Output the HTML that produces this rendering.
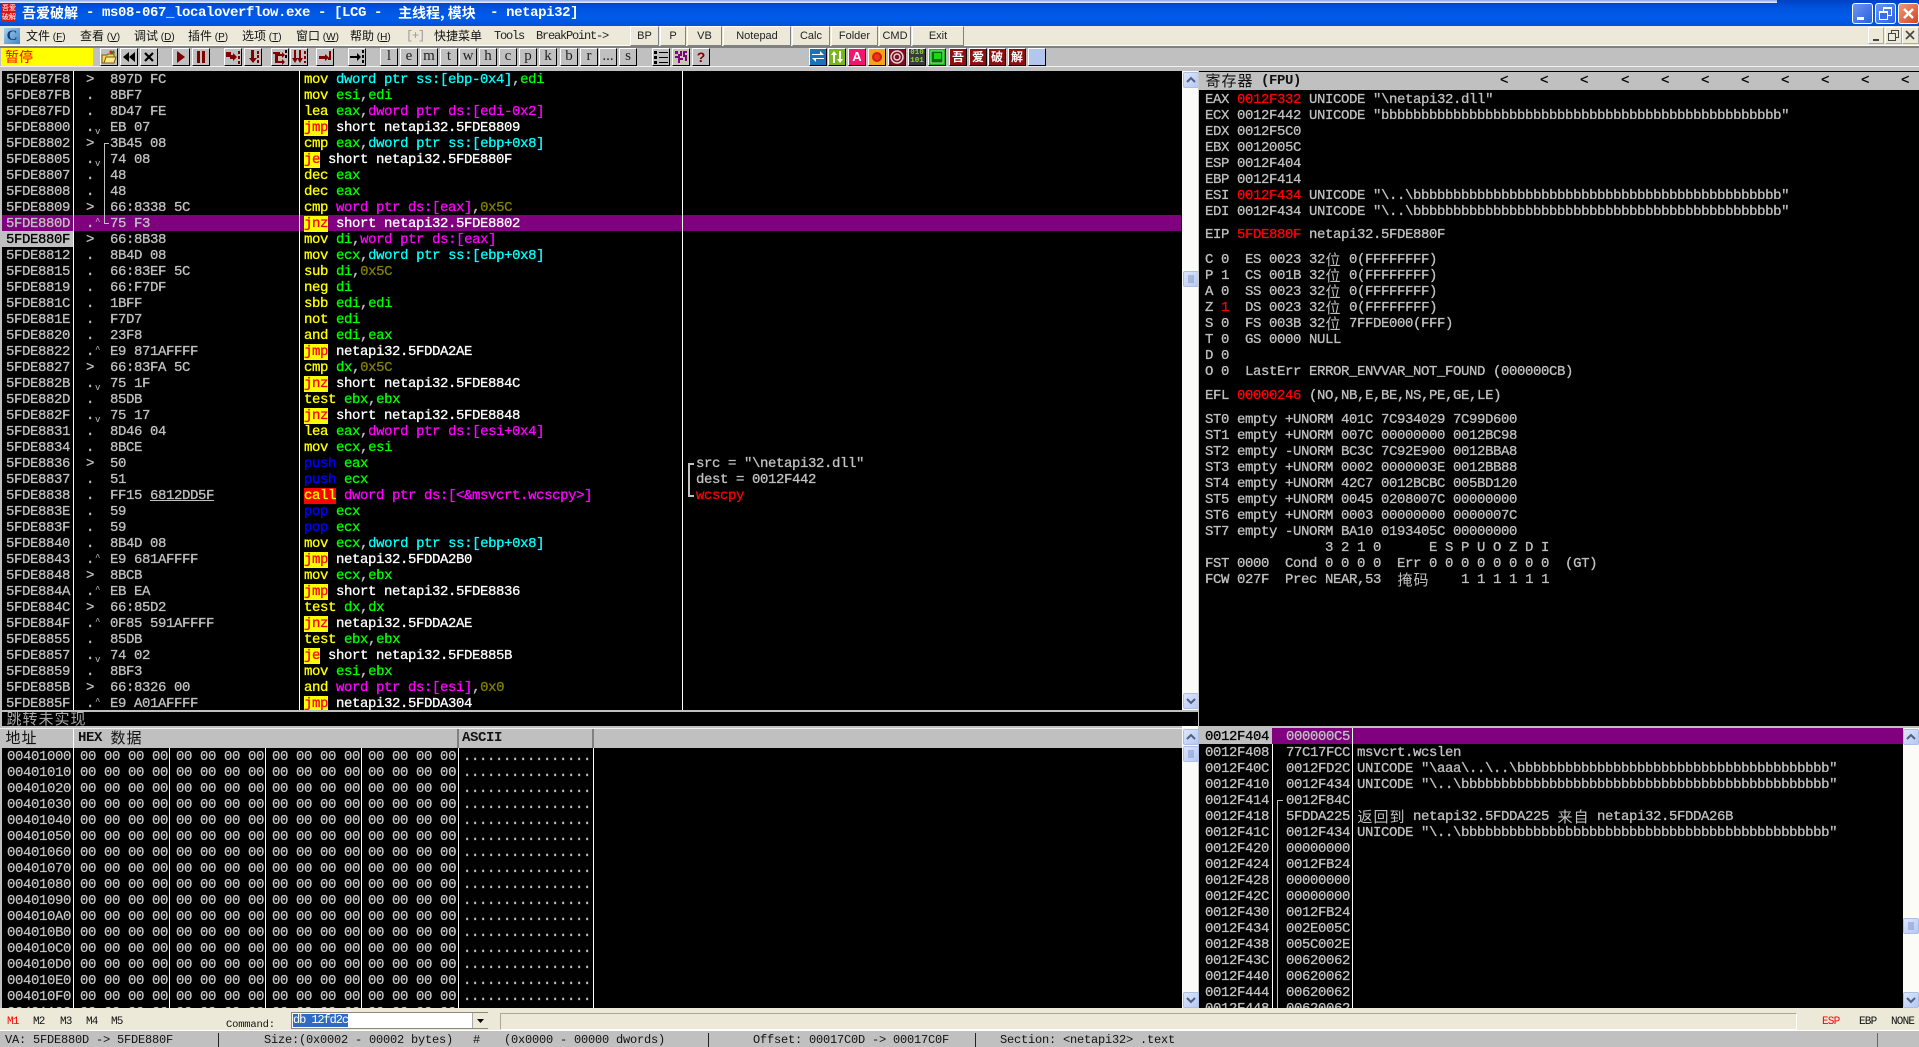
<!DOCTYPE html>
<html><head><meta charset="utf-8"><title>OllyDbg</title>
<style>
html,body{margin:0;padding:0;background:#c0c0c0}
#r{position:relative;width:1919px;height:1047px;overflow:hidden;background:#c0c0c0;font-family:"Liberation Sans","Noto Sans CJK SC",sans-serif}
#r div,#r span.a{position:absolute}
pre{position:absolute;margin:0;font:400 14px/16px "Liberation Mono","Noto Sans CJK SC",monospace;letter-spacing:-.4px;color:#c0c0c0;-webkit-text-stroke:.3px}
.h{font-weight:700;-webkit-text-stroke:0}
.y{color:#ff0}.g{color:#0f0}.c{color:#0ff}.m{color:#f0f}.o{color:#808000}.w{color:#fff}.b{color:#00f}.r{color:#f00}
.j{display:inline-block;height:16px;background:#ff0;color:#f00}
.k{display:inline-block;height:16px;background:#f00;color:#ff0}
.z{display:inline-block;width:16px;font:400 15px/16px "Noto Sans CJK SC",sans-serif;letter-spacing:0;text-align:center;vertical-align:top;-webkit-text-stroke:0}
.v{font-size:9px;line-height:0;position:relative;top:3px;left:1px;-webkit-text-stroke:0}
.u{font-size:9px;line-height:0;position:relative;top:-3px;left:1px;-webkit-text-stroke:0}
.mi{top:28px;font:400 12px/16px "Noto Sans CJK SC",sans-serif;color:#111;white-space:nowrap}
.mi small{font:400 10px/16px "Liberation Sans",sans-serif}
.mt{top:28px;font:400 12px/16px "Liberation Mono",monospace;color:#222;white-space:nowrap;letter-spacing:-1.2px}
.mb{top:26px;height:18px;background:#ece9d8;border:1px solid;border-color:#fff #808080 #808080 #fff;font:400 11px/18px "Liberation Sans",sans-serif;color:#222;text-align:center;box-sizing:content-box}
.t{top:48px;width:16px;height:16px;background:#c0c0c0;border:1px solid;border-color:#fff #000 #000 #fff;font:400 15px/15px "Liberation Serif",serif;color:#222;text-align:center;overflow:hidden}
.t svg{display:block;width:16px;height:16px}
.i{top:48px;width:16px;height:16px;border:1px solid;border-color:#fff #000 #000 #fff;overflow:hidden;text-align:center;color:#fff;font:700 12px/16px "Noto Sans CJK SC",sans-serif}
.i svg{display:block;width:16px;height:16px}
.sb{width:14px;height:14px;background:linear-gradient(135deg,#dde6fb,#b6c8f2);border:1px solid #aebfe6;border-radius:2px}
.sb svg{display:block;width:14px;height:14px}
.lw{width:1px;background:#fff}
.tm{top:1015px;font:400 11px/14px "Liberation Mono",monospace;color:#111;letter-spacing:-.8px}
.st{top:1033px;font:400 12px/14px "Liberation Mono",monospace;letter-spacing:-.2px;color:#111;white-space:nowrap}
</style></head><body><div id="r">

<!-- title bar -->
<div style="left:0;top:0;width:1919px;height:26px;background:linear-gradient(#0041c4,#0052de 30%,#005cea 70%,#0050d8)"></div>
<div style="left:0;top:0;width:1777px;height:3px;background:linear-gradient(#7fa8ea,#f2f5fb)"></div>
<div style="left:2px;top:4px;width:14px;height:18px;background:#d81818;color:#fff;font:400 7px/9px 'Noto Sans CJK SC',sans-serif;text-align:center;overflow:hidden">吾爱破解</div>
<pre class="w h" style="left:22px;top:5px;white-space:pre"><span style="display:inline-block;width:56px;font:700 14px/16px 'Noto Sans CJK SC',sans-serif;letter-spacing:0;vertical-align:top">吾爱破解</span> - ms08-067_localoverflow.exe - [LCG -  <span style="display:inline-block;width:84px;font:700 14px/16px 'Noto Sans CJK SC',sans-serif;letter-spacing:0;vertical-align:top;white-space:pre">主线程, 模块</span> - netapi32]</pre>
<div style="left:1852px;top:3px;width:19px;height:19px;background:linear-gradient(135deg,#6c96f0,#2a5fe0);border:1px solid #fff;border-radius:3px"><div style="left:4px;top:13px;width:7px;height:3px;background:#fff"></div></div>
<div style="left:1875px;top:3px;width:19px;height:19px;background:linear-gradient(135deg,#6c96f0,#2a5fe0);border:1px solid #fff;border-radius:3px"><div style="left:7px;top:3px;width:7px;height:6px;border:1px solid #fff;border-top-width:2px"></div><div style="left:3px;top:7px;width:7px;height:6px;border:1px solid #fff;border-top-width:2px;background:#3a6ce4"></div></div>
<div style="left:1898px;top:3px;width:19px;height:19px;background:linear-gradient(135deg,#f09a78,#d8431c);border:1px solid #fff;border-radius:3px"><svg width="19" height="19" style="display:block"><path d="M5 5L14 14M14 5L5 14" stroke="#fff" stroke-width="2.4" fill="none"/></svg></div>

<!-- menu bar -->
<div style="left:0;top:26px;width:1919px;height:19px;background:#ece9d8"></div>
<div style="left:0;top:45px;width:1919px;height:1px;background:#fff"></div>
<div style="left:0;top:46px;width:1919px;height:2px;background:#808080"></div>
<div style="left:4px;top:28px;width:16px;height:16px;background:linear-gradient(135deg,#a9d3ee,#3f86c4);color:#123a7c;font:700 15px/16px 'Liberation Serif',serif;text-align:center">C</div>
<span class="a mi" style="left:26px">文件<small> (<u>F</u>)</small></span>
<span class="a mi" style="left:80px">查看<small> (<u>V</u>)</small></span>
<span class="a mi" style="left:134px">调试<small> (<u>D</u>)</small></span>
<span class="a mi" style="left:188px">插件<small> (<u>P</u>)</small></span>
<span class="a mi" style="left:242px">选项<small> (<u>T</u>)</small></span>
<span class="a mi" style="left:296px">窗口<small> (<u>W</u>)</small></span>
<span class="a mi" style="left:350px">帮助<small> (<u>H</u>)</small></span>
<span class="a mt" style="left:406px;color:#999">[+]</span>
<span class="a mi" style="left:434px">快捷菜单</span>
<span class="a mt" style="left:494px">Tools</span>
<span class="a mt" style="left:536px">BreakPoint-&gt;</span>
<div class="mb" style="left:630px;width:27px">BP</div>
<div class="mb" style="left:660px;width:24px">P</div>
<div class="mb" style="left:687px;width:33px">VB</div>
<div class="mb" style="left:723px;width:66px">Notepad</div>
<div class="mb" style="left:792px;width:36px">Calc</div>
<div class="mb" style="left:831px;width:45px">Folder</div>
<div class="mb" style="left:879px;width:30px">CMD</div>
<div class="mb" style="left:912px;width:50px">Exit</div>
<div style="left:1868px;top:27px;width:16px;height:17px;background:#ece9d8;border:1px solid;border-color:#fff #aaa #aaa #fff;box-sizing:border-box"><div style="left:4px;top:11px;width:6px;height:2px;background:#444"></div></div>
<div style="left:1885px;top:27px;width:17px;height:17px;background:#ece9d8;border:1px solid;border-color:#fff #aaa #aaa #fff;box-sizing:border-box"><div style="left:5px;top:2px;width:6px;height:6px;border:1px solid #444"></div><div style="left:2px;top:5px;width:6px;height:6px;border:1px solid #444;background:#ece9d8"></div></div>
<div style="left:1902px;top:27px;width:17px;height:17px;background:#ece9d8;border:1px solid;border-color:#fff #aaa #aaa #fff;box-sizing:border-box"><svg width="15" height="15" style="display:block"><path d="M3 3L11 11M11 3L3 11" stroke="#444" stroke-width="1.6"/></svg></div>

<!-- toolbar -->
<div style="left:0;top:48px;width:1919px;height:19px;background:#c0c0c0"></div>
<div style="left:0;top:66px;width:1919px;height:1px;background:#f0f0f0"></div>
<div style="left:1px;top:48px;width:92px;height:18px;background:#ff0;color:#f00;font:400 14px/18px 'Noto Sans CJK SC',sans-serif;padding-left:4px;box-sizing:border-box">暂停</div>

<div class="t" style="left:100px"><svg viewBox="0 0 16 16"><path d="M1 6h5l1-1h6v9H1z" fill="#f6d65a" stroke="#7a5c10"/><path d="M3 14l2-6h10l-2 6z" fill="#fbe88c" stroke="#7a5c10"/><path d="M8 1l2 2 3-2 1 3-4 1z" fill="#2a8a2a"/><circle cx="10" cy="3" r="1.5" fill="#d22"/></svg></div>
<div class="t" style="left:120px"><svg viewBox="0 0 16 16"><path d="M8 3v10L2 8zM14 3v10L8 8z" fill="#000"/></svg></div>
<div class="t" style="left:140px"><svg viewBox="0 0 16 16"><path d="M4 4L12 12M12 4L4 12" stroke="#000" stroke-width="2.2"/></svg></div>
<div class="t" style="left:172px"><svg viewBox="0 0 16 16"><path d="M4 2v12l8-6z" fill="#800000"/></svg></div>
<div class="t" style="left:192px"><svg viewBox="0 0 16 16"><path d="M4 2h3v12H4zM9 2h3v12H9z" fill="#800000"/></svg></div>
<div class="t" style="left:224px"><svg viewBox="0 0 16 16"><path d="M1 3h5v3h2v-2l4 4-4 4v-2H5V8H1z" fill="#800000"/><path d="M13 2h2v3h-2zM13 7h2v3h-2zM13 12h2v3h-2z" fill="#800000"/></svg></div>
<div class="t" style="left:244px"><svg viewBox="0 0 16 16"><path d="M6 1h3v8h3l-4 5-4-5h2z" fill="#800000"/><path d="M12 2h2v3h-2zM12 6h2v3h-2zM12 11h2v3h-2z" fill="#800000"/></svg></div>
<div class="t" style="left:271px"><svg viewBox="0 0 16 16"><path d="M1 3h7v2h2V3l3 3-3 3V7H6v5h4v-2l3 3-3 3v-2H3V5H1z" fill="#800000"/><path d="M13 1h2v3h-2zM13 6h2v3h-2z" fill="#000"/></svg></div>
<div class="t" style="left:290px"><svg viewBox="0 0 16 16"><path d="M3 1h2v8h2l-3 5-3-5h2zM8 1h2v8h2l-3 5-3-5h2z" fill="#800000"/><path d="M13 2h2v3h-2zM13 7h2v3h-2zM13 12h2v2h-2z" fill="#800000"/></svg></div>
<div class="t" style="left:316px"><svg viewBox="0 0 16 16"><path d="M2 7h6V5l4 3.500-4 3.500v-2H2z" fill="#800000"/><path d="M12 2h2v9h-3V9h1z" fill="#800000"/></svg></div>
<div class="t" style="left:348px"><svg viewBox="0 0 16 16"><path d="M1 7h7V4l4 4-4 4V9H1z" fill="#000"/><path d="M13 1h2v3h-2zM13 6h2v3h-2zM13 11h2v3h-2z" fill="#000"/></svg></div>
<div class="t" style="left:380px">l</div>
<div class="t" style="left:400px">e</div>
<div class="t" style="left:420px">m</div>
<div class="t" style="left:440px">t</div>
<div class="t" style="left:459px">w</div>
<div class="t" style="left:479px">h</div>
<div class="t" style="left:499px">c</div>
<div class="t" style="left:519px">p</div>
<div class="t" style="left:539px">k</div>
<div class="t" style="left:560px">b</div>
<div class="t" style="left:580px">r</div>
<div class="t" style="left:599px">...</div>
<div class="t" style="left:619px">s</div>
<div class="t" style="left:652px"><svg viewBox="0 0 16 16"><path d="M1 2h3v3H1zM6 3h9v1H6zM1 7h3v3H1zM6 8h9v1H6zM1 12h3v3H1zM6 13h9v1H6z" fill="#000"/></svg></div>
<div class="t" style="left:672px;background:#c8c8b0"><svg viewBox="0 0 16 16"><path d="M2 2h3v3h2V2h2v5H7v2h3v2H7v3H5V9H2V7h3V5H2zM10 2h4v2h-2v2h2v6h-2V8h-2z" fill="#80008a"/></svg></div>
<div class="t" style="left:692px;color:#800000;font:700 14px/16px 'Liberation Sans',sans-serif">?</div>
<div class="i" style="left:809px;background:#1a72b8"><svg viewBox="0 0 16 16"><path d="M2 5h8V2l4 4H2zM14 10H6v3L2 9h12z" fill="#fff"/></svg></div>
<div class="i" style="left:828px;background:#7ab51d"><svg viewBox="0 0 16 16"><path d="M5 2l3 4H6v8H4V6H2zM11 14l-3-4h2V2h2v8h2z" fill="#fff"/></svg></div>
<div class="i" style="left:848px;background:#f4146e;font:700 13px/16px 'Liberation Sans',sans-serif">A</div>
<div class="i" style="left:868px;background:#f2a51a"><svg viewBox="0 0 16 16"><circle cx="8" cy="8" r="5" fill="#d21a12"/><circle cx="8" cy="8" r="3" fill="#e8381e"/></svg></div>
<div class="i" style="left:888px;background:#7c1022"><svg viewBox="0 0 16 16"><circle cx="8" cy="8" r="6" fill="none" stroke="#ecd8d8" stroke-width="1.4"/><circle cx="8" cy="8" r="3" fill="none" stroke="#ecd8d8" stroke-width="1.4"/></svg></div>
<div class="i" style="left:908px;background:#3a3a34;color:#8fd83a;font:700 7.5px/8px 'Liberation Mono',monospace">010<br>101</div>
<div class="i" style="left:928px;background:#12b812"><svg viewBox="0 0 16 16"><path d="M2 2h12v12H2z" fill="#0a6c0a" stroke="#8cf08c"/><path d="M5 4h7v6H5z" fill="#18d818"/></svg></div>
<div class="i" style="left:949px;background:#8c1010">吾</div>
<div class="i" style="left:969px;background:#8c1010">爱</div>
<div class="i" style="left:988px;background:#8c1010">破</div>
<div class="i" style="left:1008px;background:#8c1010">解</div>
<div class="i" style="left:1028px;background:#b2c6ee"></div>

<!-- CPU pane -->
<div style="left:2px;top:71px;width:1180px;height:639px;background:#000"></div>
<div style="left:2px;top:215px;width:1179px;height:16px;background:#800080"></div>
<div style="left:2px;top:231px;width:71px;height:16px;background:#c0c0c0"></div>
<div class="lw" style="left:73px;top:71px;height:639px"></div>
<div class="lw" style="left:299px;top:71px;height:639px"></div>
<div class="lw" style="left:682px;top:71px;height:639px"></div>
<div style="left:104px;top:143px;width:1px;height:80px;background:#c0c0c0"></div>
<div style="left:104px;top:143px;width:5px;height:1px;background:#c0c0c0"></div>
<div style="left:104px;top:223px;width:5px;height:1px;background:#c0c0c0"></div>

<pre style="left:6px;top:72px">5FDE87F8
5FDE87FB
5FDE87FD
5FDE8800
5FDE8802
5FDE8805
5FDE8807
5FDE8808
5FDE8809
5FDE880D
<span style="color:#000">5FDE880F</span>
5FDE8812
5FDE8815
5FDE8819
5FDE881C
5FDE881E
5FDE8820
5FDE8822
5FDE8827
5FDE882B
5FDE882D
5FDE882F
5FDE8831
5FDE8834
5FDE8836
5FDE8837
5FDE8838
5FDE883E
5FDE883F
5FDE8840
5FDE8843
5FDE8848
5FDE884A
5FDE884C
5FDE884F
5FDE8855
5FDE8857
5FDE8859
5FDE885B
5FDE885F</pre>
<pre style="left:86px;top:72px">&gt;
.
.
.<span class="v">v</span>
&gt;
.<span class="v">v</span>
.
.
&gt;
.<span class="u">^</span>
&gt;
.
.
.
.
.
.
.<span class="u">^</span>
&gt;
.<span class="v">v</span>
.
.<span class="v">v</span>
.
.
&gt;
.
.
.
.
.
.<span class="u">^</span>
&gt;
.<span class="u">^</span>
&gt;
.<span class="u">^</span>
.
.<span class="v">v</span>
.
&gt;
.<span class="u">^</span></pre>
<pre style="left:110px;top:72px">897D FC
8BF7
8D47 FE
EB 07
3B45 08
74 08
48
48
66:8338 5C
75 F3
66:8B38
8B4D 08
66:83EF 5C
66:F7DF
1BFF
F7D7
23F8
E9 871AFFFF
66:83FA 5C
75 1F
85DB
75 17
8D46 04
8BCE
50
51
FF15 <u>6812DD5F</u>
59
59
8B4D 08
E9 681AFFFF
8BCB
EB EA
66:85D2
0F85 591AFFFF
85DB
74 02
8BF3
66:8326 00
E9 A01AFFFF</pre>
<pre style="left:304px;top:72px"><span class="y">mov</span> <span class="c">dword ptr ss:[ebp-0x4]</span>,<span class="g">edi</span>
<span class="y">mov</span> <span class="g">esi</span>,<span class="g">edi</span>
<span class="y">lea</span> <span class="g">eax</span>,<span class="m">dword ptr ds:[edi-0x2]</span>
<span class="j">jmp</span> <span class="w">short netapi32.5FDE8809</span>
<span class="y">cmp</span> <span class="g">eax</span>,<span class="c">dword ptr ss:[ebp+0x8]</span>
<span class="j">je</span> <span class="w">short netapi32.5FDE880F</span>
<span class="y">dec</span> <span class="g">eax</span>
<span class="y">dec</span> <span class="g">eax</span>
<span class="y">cmp</span> <span class="m">word ptr ds:[eax]</span>,<span class="o">0x5C</span>
<span class="j">jnz</span> <span class="w">short netapi32.5FDE8802</span>
<span class="y">mov</span> <span class="g">di</span>,<span class="m">word ptr ds:[eax]</span>
<span class="y">mov</span> <span class="g">ecx</span>,<span class="c">dword ptr ss:[ebp+0x8]</span>
<span class="y">sub</span> <span class="g">di</span>,<span class="o">0x5C</span>
<span class="y">neg</span> <span class="g">di</span>
<span class="y">sbb</span> <span class="g">edi</span>,<span class="g">edi</span>
<span class="y">not</span> <span class="g">edi</span>
<span class="y">and</span> <span class="g">edi</span>,<span class="g">eax</span>
<span class="j">jmp</span> <span class="w">netapi32.5FDDA2AE</span>
<span class="y">cmp</span> <span class="g">dx</span>,<span class="o">0x5C</span>
<span class="j">jnz</span> <span class="w">short netapi32.5FDE884C</span>
<span class="y">test</span> <span class="g">ebx</span>,<span class="g">ebx</span>
<span class="j">jnz</span> <span class="w">short netapi32.5FDE8848</span>
<span class="y">lea</span> <span class="g">eax</span>,<span class="m">dword ptr ds:[esi+0x4]</span>
<span class="y">mov</span> <span class="g">ecx</span>,<span class="g">esi</span>
<span class="b">push</span> <span class="g">eax</span>
<span class="b">push</span> <span class="g">ecx</span>
<span class="k">call</span> <span class="m">dword ptr ds:[&lt;&amp;msvcrt.wcscpy&gt;]</span>
<span class="b">pop</span> <span class="g">ecx</span>
<span class="b">pop</span> <span class="g">ecx</span>
<span class="y">mov</span> <span class="g">ecx</span>,<span class="c">dword ptr ss:[ebp+0x8]</span>
<span class="j">jmp</span> <span class="w">netapi32.5FDDA2B0</span>
<span class="y">mov</span> <span class="g">ecx</span>,<span class="g">ebx</span>
<span class="j">jmp</span> <span class="w">short netapi32.5FDE8836</span>
<span class="y">test</span> <span class="g">dx</span>,<span class="g">dx</span>
<span class="j">jnz</span> <span class="w">netapi32.5FDDA2AE</span>
<span class="y">test</span> <span class="g">ebx</span>,<span class="g">ebx</span>
<span class="j">je</span> <span class="w">short netapi32.5FDE885B</span>
<span class="y">mov</span> <span class="g">esi</span>,<span class="g">ebx</span>
<span class="y">and</span> <span class="m">word ptr ds:[esi]</span>,<span class="o">0x0</span>
<span class="j">jmp</span> <span class="w">netapi32.5FDDA304</span></pre>
<div style="left:688px;top:463px;width:1px;height:33px;background:#c0c0c0;border-left:1px solid #c0c0c0"></div>
<div style="left:688px;top:463px;width:6px;height:1px;background:#c0c0c0;border-top:1px solid #c0c0c0"></div>
<div style="left:688px;top:495px;width:6px;height:1px;background:#c0c0c0;border-top:1px solid #c0c0c0"></div>
<pre style="left:696px;top:456px">src = "\netapi32.dll"
dest = 0012F442
<span class="r">wcscpy</span></pre>

<!-- scrollbars CPU -->
<div style="left:1182px;top:71px;width:16px;height:937px;background:#fbfbf8"></div>
<div class="sb" style="left:1183px;top:72px"><svg viewBox="0 0 14 14"><path d="M3 9L7 5L11 9" stroke="#4d6185" stroke-width="2" fill="none"/></svg></div>
<div class="sb" style="left:1183px;top:271px"><svg viewBox="0 0 14 14"><path d="M4 4h6M4 6h6M4 8h6M4 10h6" stroke="#7f93c8" stroke-width="1"/></svg></div>
<div class="sb" style="left:1183px;top:693px"><svg viewBox="0 0 14 14"><path d="M3 5L7 9L11 5" stroke="#4d6185" stroke-width="2" fill="none"/></svg></div>

<!-- info pane -->
<div style="left:0;top:710px;width:1199px;height:2px;background:#c0c0c0"></div>
<div style="left:2px;top:712px;width:1197px;height:14px;background:#000;overflow:hidden"><pre style="left:4px;top:-1px;color:#a8a8a8"><span class="z">跳</span><span class="z">转</span><span class="z">未</span><span class="z">实</span><span class="z">现</span></pre></div>

<!-- registers -->
<div style="left:1199px;top:71px;width:720px;height:655px;background:#000"></div>
<div style="left:1198px;top:71px;width:1px;height:655px;background:#c8c8c8"></div>
<div style="left:1199px;top:72px;width:720px;height:18px;background:#c0c0c0"></div>
<pre class="h" style="left:1205px;top:73px;color:#111"><span class="z">寄</span><span class="z">存</span><span class="z">器</span> (FPU)</pre>
<pre style="left:1500px;top:73px;color:#000">&lt;</pre><pre style="left:1540px;top:73px;color:#000">&lt;</pre><pre style="left:1580px;top:73px;color:#000">&lt;</pre><pre style="left:1621px;top:73px;color:#000">&lt;</pre><pre style="left:1661px;top:73px;color:#000">&lt;</pre><pre style="left:1701px;top:73px;color:#000">&lt;</pre><pre style="left:1741px;top:73px;color:#000">&lt;</pre><pre style="left:1781px;top:73px;color:#000">&lt;</pre><pre style="left:1821px;top:73px;color:#000">&lt;</pre><pre style="left:1861px;top:73px;color:#000">&lt;</pre><pre style="left:1901px;top:73px;color:#000">&lt;</pre>

<pre style="left:1205px;top:92px">EAX <span class="r">0012F332</span> UNICODE "\netapi32.dll"
ECX 0012F442 UNICODE "bbbbbbbbbbbbbbbbbbbbbbbbbbbbbbbbbbbbbbbbbbbbbbbbbb"
EDX 0012F5C0
EBX 0012005C
ESP 0012F404
EBP 0012F414
ESI <span class="r">0012F434</span> UNICODE "\..\bbbbbbbbbbbbbbbbbbbbbbbbbbbbbbbbbbbbbbbbbbbbbb"
EDI 0012F434 UNICODE "\..\bbbbbbbbbbbbbbbbbbbbbbbbbbbbbbbbbbbbbbbbbbbbbb"</pre>
<pre style="left:1205px;top:227px">EIP <span class="r">5FDE880F</span> netapi32.5FDE880F</pre>
<pre style="left:1205px;top:252px">C 0  ES 0023 32<span class="z">位</span> 0(FFFFFFFF)
P 1  CS 001B 32<span class="z">位</span> 0(FFFFFFFF)
A 0  SS 0023 32<span class="z">位</span> 0(FFFFFFFF)
Z <span class="r">1</span>  DS 0023 32<span class="z">位</span> 0(FFFFFFFF)
S 0  FS 003B 32<span class="z">位</span> 7FFDE000(FFF)
T 0  GS 0000 NULL
D 0
O 0  LastErr ERROR_ENVVAR_NOT_FOUND (000000CB)</pre>
<pre style="left:1205px;top:388px">EFL <span class="r">00000246</span> (NO,NB,E,BE,NS,PE,GE,LE)</pre>
<pre style="left:1205px;top:412px">ST0 empty +UNORM 401C 7C934029 7C99D600
ST1 empty +UNORM 007C 00000000 0012BC98
ST2 empty -UNORM BC3C 7C92E900 0012BBA8
ST3 empty +UNORM 0002 0000003E 0012BB88
ST4 empty +UNORM 42C7 0012BCBC 005BD120
ST5 empty +UNORM 0045 0208007C 00000000
ST6 empty +UNORM 0003 00000000 0000007C
ST7 empty -UNORM BA10 0193405C 00000000
               3 2 1 0      E S P U O Z D I
FST 0000  Cond 0 0 0 0  Err 0 0 0 0 0 0 0 0  (GT)
FCW 027F  Prec NEAR,53  <span class="z">掩</span><span class="z">码</span>    1 1 1 1 1 1</pre>

<!-- dump pane -->
<div style="left:0;top:726px;width:1182px;height:2px;background:#c0c0c0"></div>
<div style="left:2px;top:728px;width:1180px;height:20px;background:#c0c0c0"></div>
<div style="left:0;top:728px;width:1182px;height:1px;background:#f0f0f0"></div>
<pre style="left:5px;top:730px;color:#111"><span class="z">地</span><span class="z">址</span></pre>
<pre class="h" style="left:78px;top:730px;color:#111">HEX <span class="z">数</span><span class="z">据</span></pre>
<pre class="h" style="left:462px;top:730px;color:#111">ASCII</pre>
<div style="left:73px;top:729px;width:1px;height:19px;background:#fff"></div>
<div style="left:457px;top:729px;width:2px;height:19px;background:#808080"></div>
<div style="left:592px;top:729px;width:2px;height:19px;background:#808080"></div>
<div style="left:2px;top:748px;width:1180px;height:260px;background:#000;overflow:hidden">
<pre style="left:5px;top:1px">00401000
00401010
00401020
00401030
00401040
00401050
00401060
00401070
00401080
00401090
004010A0
004010B0
004010C0
004010D0
004010E0
004010F0
00401100</pre>
<pre style="left:78px;top:1px">00 00 00 00 00 00 00 00 00 00 00 00 00 00 00 00
00 00 00 00 00 00 00 00 00 00 00 00 00 00 00 00
00 00 00 00 00 00 00 00 00 00 00 00 00 00 00 00
00 00 00 00 00 00 00 00 00 00 00 00 00 00 00 00
00 00 00 00 00 00 00 00 00 00 00 00 00 00 00 00
00 00 00 00 00 00 00 00 00 00 00 00 00 00 00 00
00 00 00 00 00 00 00 00 00 00 00 00 00 00 00 00
00 00 00 00 00 00 00 00 00 00 00 00 00 00 00 00
00 00 00 00 00 00 00 00 00 00 00 00 00 00 00 00
00 00 00 00 00 00 00 00 00 00 00 00 00 00 00 00
00 00 00 00 00 00 00 00 00 00 00 00 00 00 00 00
00 00 00 00 00 00 00 00 00 00 00 00 00 00 00 00
00 00 00 00 00 00 00 00 00 00 00 00 00 00 00 00
00 00 00 00 00 00 00 00 00 00 00 00 00 00 00 00
00 00 00 00 00 00 00 00 00 00 00 00 00 00 00 00
00 00 00 00 00 00 00 00 00 00 00 00 00 00 00 00
00 00 00 00 00 00 00 00 00 00 00 00 00 00 00 00</pre>
<pre style="left:461px;top:1px">................
................
................
................
................
................
................
................
................
................
................
................
................
................
................
................
................</pre>
<div class="lw" style="left:71px;top:0;height:260px"></div>
<div class="lw" style="left:167px;top:0;height:260px"></div>
<div class="lw" style="left:263px;top:0;height:260px"></div>
<div class="lw" style="left:359px;top:0;height:260px"></div>
<div class="lw" style="left:456px;top:0;height:260px"></div>
<div class="lw" style="left:591px;top:0;height:260px"></div>
</div>
<div class="sb" style="left:1183px;top:729px"><svg viewBox="0 0 14 14"><path d="M3 9L7 5L11 9" stroke="#4d6185" stroke-width="2" fill="none"/></svg></div>
<div class="sb" style="left:1183px;top:746px"><svg viewBox="0 0 14 14"><path d="M4 4h6M4 6h6M4 8h6M4 10h6" stroke="#7f93c8" stroke-width="1"/></svg></div>
<div class="sb" style="left:1183px;top:992px"><svg viewBox="0 0 14 14"><path d="M3 5L7 9L11 5" stroke="#4d6185" stroke-width="2" fill="none"/></svg></div>

<!-- stack pane -->
<div style="left:1198px;top:726px;width:721px;height:2px;background:#c0c0c0"></div>
<div style="left:1199px;top:728px;width:704px;height:280px;background:#000;overflow:hidden">
<div style="left:0;top:0;width:73px;height:16px;background:#c0c0c0"></div>
<div style="left:73px;top:0;width:631px;height:16px;background:#800080"></div>
<div class="lw" style="left:73px;top:16px;height:264px"></div>
<div class="lw" style="left:153px;top:0;height:280px"></div>
<div style="left:78px;top:72px;width:1px;height:208px;background:#c0c0c0"></div>
<div style="left:78px;top:72px;width:6px;height:1px;background:#c0c0c0"></div>
<pre style="left:6px;top:1px"><span style="color:#000">0012F404</span>
0012F408
0012F40C
0012F410
0012F414
0012F418
0012F41C
0012F420
0012F424
0012F428
0012F42C
0012F430
0012F434
0012F438
0012F43C
0012F440
0012F444
0012F448</pre>
<pre style="left:87px;top:1px">000000C5
77C17FCC
0012FD2C
0012F434
0012F84C
5FDDA225
0012F434
00000000
0012FB24
00000000
00000000
0012FB24
002E005C
005C002E
00620062
00620062
00620062
00620062</pre>
<pre style="left:158px;top:17px">msvcrt.wcslen
UNICODE "\aaa\..\..\bbbbbbbbbbbbbbbbbbbbbbbbbbbbbbbbbbbbbbb"
UNICODE "\..\bbbbbbbbbbbbbbbbbbbbbbbbbbbbbbbbbbbbbbbbbbbbbb"
 
<span class="z">返</span><span class="z">回</span><span class="z">到</span> netapi32.5FDDA225 <span class="z">来</span><span class="z">自</span> netapi32.5FDDA26B
UNICODE "\..\bbbbbbbbbbbbbbbbbbbbbbbbbbbbbbbbbbbbbbbbbbbbbb"</pre>
</div>
<div style="left:1903px;top:728px;width:16px;height:280px;background:#fbfbf8"></div>
<div class="sb" style="left:1903px;top:729px"><svg viewBox="0 0 14 14"><path d="M3 9L7 5L11 9" stroke="#4d6185" stroke-width="2" fill="none"/></svg></div>
<div class="sb" style="left:1903px;top:918px"><svg viewBox="0 0 14 14"><path d="M4 4h6M4 6h6M4 8h6M4 10h6" stroke="#7f93c8" stroke-width="1"/></svg></div>
<div class="sb" style="left:1903px;top:992px"><svg viewBox="0 0 14 14"><path d="M3 5L7 9L11 5" stroke="#4d6185" stroke-width="2" fill="none"/></svg></div>

<!-- command bar -->
<div style="left:0;top:1008px;width:1919px;height:22px;background:#ece9d8"></div>
<div style="left:0;top:1030px;width:1919px;height:1px;background:#fff"></div>
<span class="a tm" style="left:7px;color:#f00">M1</span>
<span class="a tm" style="left:33px">M2</span>
<span class="a tm" style="left:60px">M3</span>
<span class="a tm" style="left:86px">M4</span>
<span class="a tm" style="left:111px">M5</span>
<span class="a" style="left:226px;top:1018px;font:400 10.5px/14px 'Liberation Mono',monospace;color:#111;letter-spacing:-.2px">Command:</span>
<div style="left:291px;top:1012px;width:197px;height:17px;background:#fff;border:1px solid #7f9db9;box-sizing:border-box;border-color:#8a8a7c"></div>
<div style="left:293px;top:1014px;width:55px;height:13px;background:#316ac5;color:#fff;font:400 12px/13px 'Liberation Mono',monospace;letter-spacing:-1.1px;white-space:nowrap;text-align:center">db 12fd2c</div>
<div style="left:472px;top:1013px;width:15px;height:15px;background:#ece9d8;border-left:1px solid #aaa"><svg width="15" height="15" style="display:block"><path d="M4 6h7l-3.500 4z" fill="#000"/></svg></div>
<div style="left:500px;top:1013px;width:1297px;height:17px;box-sizing:border-box;border:1px solid;border-color:#aca899 #fff #fff #aca899"></div>
<span class="a tm" style="left:1822px;color:#f00">ESP</span>
<span class="a tm" style="left:1859px">EBP</span>
<span class="a tm" style="left:1891px">NONE</span>

<!-- status bar -->
<div style="left:0;top:1031px;width:1919px;height:16px;background:#c0c0c0"></div>
<span class="a st" style="left:5px">VA: 5FDE880D -&gt; 5FDE880F</span>
<div style="left:218px;top:1033px;width:1px;height:14px;background:#222"></div>
<span class="a st" style="left:264px">Size:(0x0002 - 00002 bytes)</span>
<span class="a st" style="left:473px">#</span>
<span class="a st" style="left:504px">(0x0000 - 00000 dwords)</span>
<div style="left:708px;top:1033px;width:1px;height:14px;background:#222"></div>
<span class="a st" style="left:753px">Offset: 00017C0D -&gt; 00017C0F</span>
<div style="left:975px;top:1033px;width:1px;height:14px;background:#222"></div>
<span class="a st" style="left:1000px">Section: &lt;netapi32&gt; .text</span>
<div style="left:1877px;top:1033px;width:1px;height:14px;background:#666"></div>

</div></body></html>
